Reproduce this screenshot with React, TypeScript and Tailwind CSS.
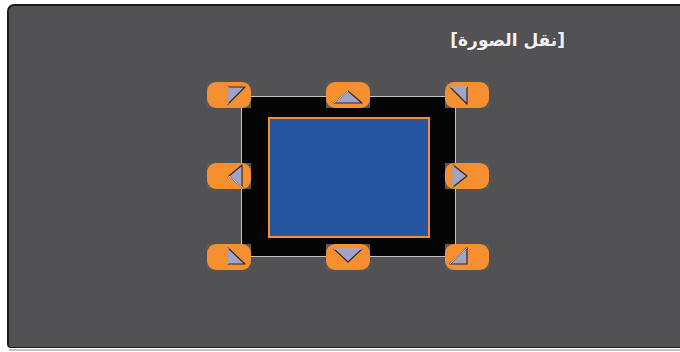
import React from 'react';

type Pt = [number, number];

interface HandleProps {
  points: Pt[];
  className: string;
}

// triangle with a small bevel: light on the first edge, dark outline
const Handle: React.FC<HandleProps> = ({ points, className }) => {
  const d = points.map((p) => p.join(',')).join(' ');
  return (
    <div className={`absolute w-[44px] h-[26px] bg-[#59595b] ${className}`}>
      <svg width={44} height={26} viewBox="0 0 44 26" className="block">
        <rect x={0} y={0} width={44} height={26} rx={9} fill="#f68f30" />
        <polygon points={d} fill="#a3a3c7" stroke="#2a2a36" strokeWidth={1.2} strokeLinejoin="round" />
        <polyline
          points={`${points[0].join(',')} ${points[1].join(',')}`}
          fill="none"
          stroke="#e9e9f4"
          strokeWidth={1}
        />
      </svg>
    </div>
  );
};

const handles: { key: string; points: Pt[]; className: string }[] = [
  { key: 'tl', points: [[21, 22], [21, 5], [38, 5]], className: 'left-0 top-0' },
  { key: 'tm', points: [[8, 21], [22, 9], [36, 21]], className: 'left-[119px] top-0' },
  { key: 'tr', points: [[5, 5], [22, 5], [22, 22]], className: 'left-[238px] top-0' },
  { key: 'ml', points: [[35, 24], [22, 13], [35, 2]], className: 'left-0 top-[81px]' },
  { key: 'mr', points: [[8, 24], [8, 2], [22, 13]], className: 'left-[238px] top-[81px]' },
  { key: 'bl', points: [[21, 20], [21, 4], [38, 20]], className: 'left-0 top-[162px]' },
  { key: 'bm', points: [[8, 5], [36, 5], [22, 18]], className: 'left-[119px] top-[162px]' },
  { key: 'br', points: [[5, 20], [22, 4], [22, 20]], className: 'left-[238px] top-[162px]' },
];

export default function App() {
  return (
    <div className="w-[680px] h-[352px] bg-white overflow-hidden pt-[4px] pl-[7px]">
      <div className="h-[344px] bg-[#525254] border-t-2 border-l-2 border-b border-[#1c1c1e] rounded-tl-[7px] rounded-bl-[4px]">
        {/* title */}
        <div className="flex justify-end pr-[115px] pt-[24px]">
          <div
            dir="rtl"
            className="text-[17px] leading-[21px] font-bold text-[#f2f2f2]"
            style={{ fontFamily: '"DejaVu Sans", sans-serif' }}
          >
            [نقل الصورة]
          </div>
        </div>

        {/* frame with handles */}
        <div className="relative ml-[198px] mt-[31px] w-[282px] h-[188px] pt-[14px] pl-[34px]">
          <div className="w-[215px] h-[161px] border border-[#c4c4c4] bg-[#050505] pl-[26px] pt-[20px]">
            <div className="w-[162px] h-[121px] border-2 border-[#f68f30] bg-[#2755a2]" />
          </div>
          {handles.map((h) => (
            <Handle key={h.key} points={h.points} className={h.className} />
          ))}
        </div>
      </div>
      <div className="mt-[1px] h-[2px] ml-[2px] bg-[#c2c2c2]" />
    </div>
  );
}
